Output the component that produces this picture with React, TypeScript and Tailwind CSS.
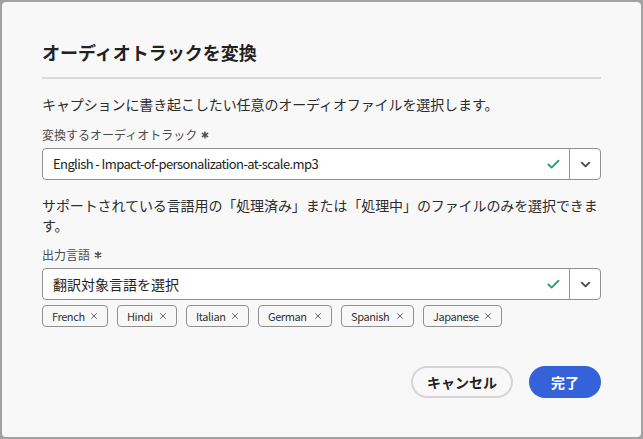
import { Check, ChevronDown, X } from 'lucide-react';

const tags = [
  { label: 'French', w: 'w-[66px]' },
  { label: 'Hindi', w: 'w-[60px]' },
  { label: 'Italian', w: 'w-[63px]' },
  { label: 'German', w: 'w-[74px]' },
  { label: 'Spanish', w: 'w-[73px]' },
  { label: 'Japanese', w: 'w-[79px]' },
];

function Asterisk() {
  return (
    <svg width="8" height="8" viewBox="0 0 10 10" className="ml-1 inline-block">
      <path
        d="M5 0.5v9M1.1 2.75l7.8 4.5M1.1 7.25l7.8-4.5"
        stroke="#4b4b4b"
        strokeWidth="1.8"
        fill="none"
      />
    </svg>
  );
}

function Picker({ value, latin }: { value: string; latin?: boolean }) {
  return (
    <div className="flex h-[32px] rounded-[4px] border border-[#909090] bg-white">
      <div className="flex flex-1 items-center pl-[10px] pr-[8px] text-[#222]">
        <span
          className={
            latin
              ? 'flex-1 truncate text-[13px] tracking-[-0.6px]'
              : 'flex-1 truncate text-[14px]'
          }
        >
          {value}
        </span>
        <Check size={15} strokeWidth={3} className="text-[#2d9d78]" />
      </div>
      <div className="flex w-[31px] items-center justify-center border-l border-[#909090]">
        <ChevronDown size={15} strokeWidth={3} className="text-[#4b4b4b]" />
      </div>
    </div>
  );
}

export default function App() {
  return (
    <div className="h-[439px] w-[643px] bg-[#a2a2a2] p-[2px] font-['Noto_Sans_CJK_JP','Noto_Sans',sans-serif] antialiased">
      <div className="flex h-[435px] flex-col rounded-[4px] bg-[#f8f8f8] px-10 pt-[38px]">
        <h1 className="text-[18px] font-bold leading-[24px] text-[#222]">
          オーディオトラックを変換
        </h1>
        <div className="mt-[13px] h-[2px] bg-[#dadada]" />

        <p className="mt-[15px] text-[14px] leading-[20px] tracking-[-0.1px] text-[#2c2c2c]">
          キャプションに書き起こしたい任意のオーディオファイルを選択します。
        </p>

        <label className="mt-[12px] flex items-center text-[12px] leading-[18px] text-[#4b4b4b]">
          変換するオーディオトラック
          <Asterisk />
        </label>
        <div className="mt-[4px]">
          <Picker latin value="English - Impact-of-personalization-at-scale.mp3" />
        </div>

        <p className="mt-[15px] text-[14px] leading-[20px] tracking-[-0.1px] text-[#2c2c2c]">
          サポートされている言語用の「処理済み」または「処理中」のファイルのみを選択できます。
        </p>

        <label className="mt-[11px] flex items-center text-[12px] leading-[18px] text-[#4b4b4b]">
          出力言語
          <Asterisk />
        </label>
        <div className="mt-[4px]">
          <Picker value="翻訳対象言語を選択" />
        </div>

        <div className="mt-[5px] flex gap-[9px]">
          {tags.map((t) => (
            <div
              key={t.label}
              className={`flex h-[22px] items-center justify-between rounded-[4px] border border-[#909090] pl-[9px] pr-[8px] text-[11px] tracking-[-0.4px] text-[#333] ${t.w}`}
            >
              {t.label}
              <X size={10} strokeWidth={2} className="text-[#4b4b4b]" />
            </div>
          ))}
        </div>

        <div className="mt-[39px] flex justify-end gap-[16px]">
          <button className="h-[32px] w-[102px] rounded-full border-2 border-[#d5d5d5] text-[14px] font-bold text-[#222]">
            キャンセル
          </button>
          <button className="h-[32px] w-[72px] rounded-full bg-[#3662d9] text-[14px] font-bold text-white">
            完了
          </button>
        </div>
      </div>
    </div>
  );
}
